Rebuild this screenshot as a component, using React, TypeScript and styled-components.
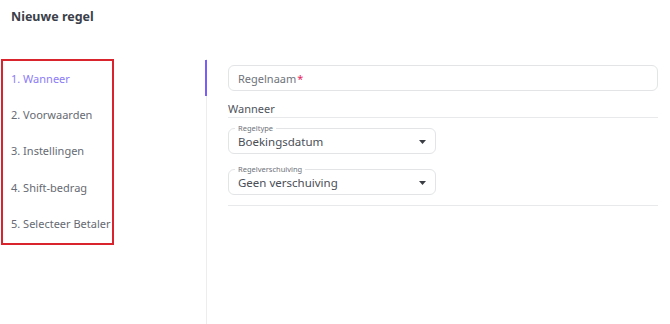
import React from 'react';
import styled, {createGlobalStyle} from 'styled-components';

const GlobalStyle = createGlobalStyle`
html, body {
  margin: 0;
  padding: 0;
  background: #ffffff;
  font-family: "Noto Sans", "Open Sans", sans-serif;
}
`

const Page = styled.div`
width: 670px;
height: 324px;
display: flex;
flex-direction: column;
overflow: hidden;
`
const Header = styled.div`
height: 59px;
padding: 8px 0 0 11px;
box-sizing: border-box;
`
const Title = styled.h1`
margin: 0;
font-size: 12.5px;
font-weight: 700;
color: #3b3f4a;
`
const Body = styled.div`
flex: 1;
display: flex;
`
const Nav = styled.div`
width: 206px;
position: relative;
border-right: 1px solid #ededed;
`
const Indicator = styled.div`
position: absolute;
right: -1px;
top: 1px;
width: 2px;
height: 36px;
background: #7b5cff;
`
const TabList = styled.div`
width: 109px;
margin-left: 1px;
border: 2px solid #d9232d;
display: flex;
flex-direction: column;
`
const Tab = styled.div<{active?: boolean}>`
height: 36.4px;
display: flex;
align-items: center;
padding-left: 8px;
padding-bottom: 2px;
box-sizing: border-box;
font-size: 11px;
white-space: nowrap;
color: ${p => p.active ? '#8c7cf7' : '#666a73'};
`
const Content = styled.div`
flex: 1;
padding: 6px 12px 0 21px;
display: flex;
flex-direction: column;
`
const TextInput = styled.div`
height: 26px;
border: 1px solid #e2e4e6;
border-radius: 6px;
box-sizing: border-box;
display: flex;
align-items: center;
padding-left: 9px;
font-size: 11px;
color: #6f737b;
`
const Required = styled.span`
color: #e8245a;
margin-left: 1px;
`
const Section = styled.div`
margin-top: 10px;
padding-bottom: 1px;
border-bottom: 1px solid #e8e9eb;
font-size: 11px;
color: #50545c;
`
const Fields = styled.div`
display: flex;
flex-direction: column;
gap: 15px;
padding: 10px 0 10px;
border-bottom: 1px solid #e8e9eb;
`
const Select = styled.div`
width: 208px;
height: 26px;
box-sizing: border-box;
border: 1px solid #e2e4e6;
border-radius: 6px;
padding: 1px 9px 0 9px;
display: flex;
align-items: center;
justify-content: space-between;
position: relative;
`
const FloatLabel = styled.span`
position: absolute;
top: -5px;
left: 6px;
padding: 0 3px;
background: #ffffff;
font-size: 7.5px;
line-height: 9px;
color: #6f737b;
`
const Value = styled.span`
font-size: 11.5px;
color: #4a4e56;
`
const Caret = styled.svg`
display: block;
`

export default function App() {
  const tabs = ['1. Wanneer', '2. Voorwaarden', '3. Instellingen', '4. Shift-bedrag', '5. Selecteer Betaler']
  return (
    <Page>
      <GlobalStyle/>
      <Header><Title>Nieuwe regel</Title></Header>
      <Body>
        <Nav>
          <TabList>
            {tabs.map((t, i) => <Tab key={t} active={i === 0}>{t}</Tab>)}
          </TabList>
          <Indicator/>
        </Nav>
        <Content>
          <TextInput>Regelnaam<Required>*</Required></TextInput>
          <Section>Wanneer</Section>
          <Fields>
            <Select>
              <FloatLabel>Regeltype</FloatLabel>
              <Value>Boekingsdatum</Value>
              <Caret width="7" height="4" viewBox="0 0 7 4"><path d="M0 0h7L3.5 4z" fill="#3a3d43"/></Caret>
            </Select>
            <Select>
              <FloatLabel>Regelverschuiving</FloatLabel>
              <Value>Geen verschuiving</Value>
              <Caret width="7" height="4" viewBox="0 0 7 4"><path d="M0 0h7L3.5 4z" fill="#3a3d43"/></Caret>
            </Select>
          </Fields>
        </Content>
      </Body>
    </Page>
  );
}
